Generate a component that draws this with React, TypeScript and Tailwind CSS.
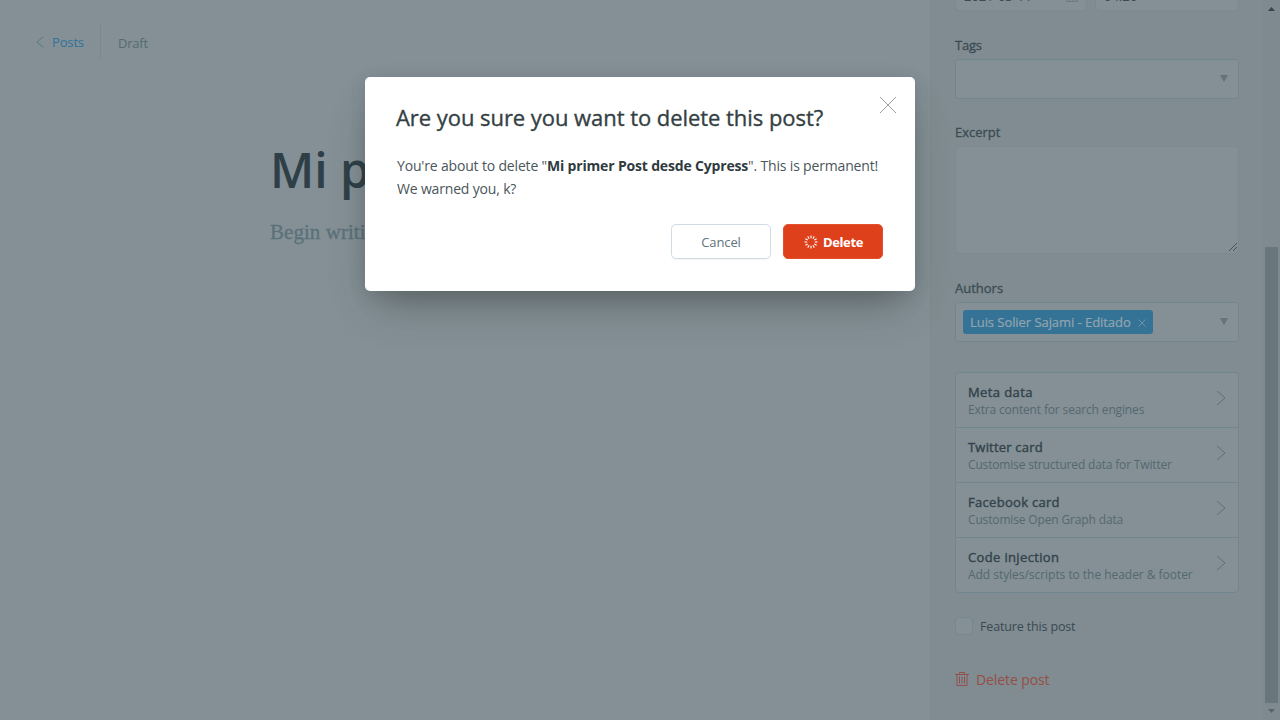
import type { ReactNode } from 'react';

const cards = [
  { title: 'Meta data', text: 'Extra content for search engines', a: 'tracking-[0.4px]', b: 'tracking-[-0.15px]' },
  { title: 'Twitter card', text: 'Customise structured data for Twitter', a: 'tracking-[0.2px]', b: 'tracking-[-0.17px]' },
  { title: 'Facebook card', text: 'Customise Open Graph data', a: 'tracking-[0.3px]', b: 'tracking-[-0.15px]' },
  { title: 'Code injection', text: 'Add styles/scripts to the header & footer', a: 'tracking-[0.35px]', b: 'tracking-[-0.04px]' },
];

function Label({ children }: { children: ReactNode }) {
  return (
    <div className="mb-1 h-5 text-[13px] leading-5 text-[#3c4b53] [-webkit-text-stroke:0.3px_#3c4b53]">{children}</div>
  );
}

function Caret() {
  return (
    <svg className="mr-[10px] mb-[2px] h-[7px] w-2 shrink-0" viewBox="0 0 8 7">
      <path d="M0 0h8L4 7z" fill="#65737a" />
    </svg>
  );
}

function Sidebar() {
  return (
    <aside className="flex h-[720px] w-[333px] shrink-0 flex-col overflow-hidden border-l border-[#7b8b92] bg-[#808c91] pl-6 pr-6">
      <div className="-mt-[29px] flex h-10 w-[284px] shrink-0 gap-2 text-[13px] text-[#3c4b53]">
        <div className="flex h-10 w-[132px] items-start justify-between rounded-[4px] border border-[#788a92] bg-[#849096] pl-2 pr-[8px]">
          <span className="h-10 leading-[48px]">2021-03-11</span>
          <svg className="mt-[18px] h-3 w-3" viewBox="0 0 12 12" fill="none" stroke="#6d7b82">
            <path d="M.5 1.500h11v10H.5zM.5 4.500h11M3.500 5v6M6.500 5v6M9.500 5v6M1 8.500h10" />
          </svg>
        </div>
        <div className="flex h-10 w-36 items-start justify-between rounded-[4px] border border-[#788a92] bg-[#849096] pl-2 pr-[14px]">
          <span className="h-10 leading-[48px]">04:26</span>
          <span className="h-10 text-[9px] leading-[48px] text-[#66757c]">(UTC)</span>
        </div>
      </div>

      <div className="mt-6 w-[284px] shrink-0">
        <Label>
          <span className="tracking-[-0.2px]">Tags</span>
        </Label>
        <div className="flex h-10 items-center justify-end rounded-[3px] border border-[#71868f] bg-[#849096]">
          <Caret />
        </div>
      </div>

      <div className="mt-[23px] w-[284px] shrink-0">
        <Label>Excerpt</Label>
        <div className="flex h-[108px] items-end justify-end rounded-[4px] border border-[#788a92] bg-[#849096]">
          <svg className="mr-px mb-px h-[9px] w-[9px]" viewBox="0 0 9 9" shapeRendering="crispEdges">
            <path d="M.5 8.500l8-8M4.500 8.500l4-4" stroke="#45535a" fill="none" />
          </svg>
        </div>
      </div>

      <div className="mt-6 w-[284px] shrink-0">
        <Label>Authors</Label>
        <div className="flex h-10 items-center justify-between rounded-[3px] border border-[#71868f] bg-[#849096] pl-[7px]">
          <div className="flex h-6 w-[190px] items-center justify-between rounded-[3px] bg-[#357396] pl-[7px] pr-[7px] text-[13px] leading-6 text-[#93a5ae]">
            <span className="whitespace-nowrap tracking-[-0.06px] [-webkit-text-stroke:0.2px_#93a5ae]">
              Luis Solier Sajami - Editado
            </span>
            <svg className="mt-[2px] h-2 w-2" viewBox="0 0 8 8">
              <path d="M.5.5l7 7M7.500.5l-7 7" stroke="#7b9bab" strokeWidth=".8" fill="none" />
            </svg>
          </div>
          <Caret />
        </div>
      </div>

      <div className="mt-[30px] w-[284px] shrink-0 rounded-[4px] border border-b-0 border-[#71868f] bg-[#849096]">
        {cards.map((c) => (
          <div
            key={c.title}
            className="flex h-[55px] justify-between border-b border-[#71868f] pl-3 pr-3 pt-[10px] last:rounded-b-[4px]"
          >
            <div className="whitespace-nowrap">
              <div
                className={
                  'h-[18px] text-[13px] leading-[18px] text-[#33434b] [-webkit-text-stroke:0.4px_#33434b] ' + c.a
                }
              >
                {c.title}
              </div>
              <div className={'text-[12px] leading-[18px] text-[#54686f] ' + c.b}>{c.text}</div>
            </div>
            <svg className="mt-[7px] h-4 w-[10px]" viewBox="0 0 10 16">
              <path d="M1 1l8 7-8 7" stroke="#55666e" strokeWidth=".8" fill="none" />
            </svg>
          </div>
        ))}
      </div>

      <div className="mt-6 flex h-[18px] shrink-0 items-center gap-[7px]">
        <div className="h-[18px] w-[18px] rounded-[4px] border border-[#738891] bg-[#849096]" />
        <span className="pt-[2px] text-[12.500px] leading-[18px] tracking-[-0.15px] text-[#3a4951]">Feature this post</span>
      </div>

      <div className="mt-[35px] flex h-5 shrink-0 items-center gap-[7px] text-[#954f46]">
        <svg className="mb-[2px] h-[14px] w-[14px]" viewBox="0 0 14 14" fill="none" stroke="#915148">
          <path d="M0 2.500h14M4.500 2V.5h5V2M2 2.500v11h10v-11M4.500 4.500v7M7 4.500v7M9.500 4.500v7" />
        </svg>
        <span className="text-sm leading-5 tracking-[-0.1px]">Delete post</span>
      </div>
    </aside>
  );
}

function Scrollbar() {
  return (
    <div className="flex h-[720px] w-[17px] shrink-0 flex-col items-center bg-[#7e8a90]">
      <svg className="mt-[7px] mr-px h-1 w-[7px] shrink-0" viewBox="0 0 7 4">
        <path d="M3.500 0L7 4H0z" fill="#37454c" />
      </svg>
      <div className="mt-[236px] mr-px h-[456px] w-[13px] shrink-0 bg-[#69767c]" />
      <svg className="mt-[6px] mr-px h-1 w-[7px] shrink-0" viewBox="0 0 7 4">
        <path d="M0 0h7L3.500 4z" fill="#56646b" />
      </svg>
    </div>
  );
}

function Spinner() {
  return (
    <svg className="ml-px h-[14px] w-[14px]" viewBox="0 0 14 14" stroke="#fff" strokeWidth="1.100">
      {Array.from({ length: 12 }, (_, i) => (
        <line key={i} x1="7" y1="0.5" x2="7" y2="3.200" transform={`rotate(${i * 30} 7 7)`} />
      ))}
    </svg>
  );
}

function Modal() {
  return (
    <div className="absolute left-[365px] top-[77px] h-[214px] w-[550px] rounded-[5px] bg-white px-8 pt-[26px] shadow-[0_22px_40px_-12px_rgba(40,45,40,0.42),0_4px_16px_rgba(50,60,65,0.18)]">
      <svg className="absolute right-[19px] top-5 h-4 w-4" viewBox="0 0 16 16">
        <path d="M0 0l16 16M16 0L0 16" stroke="#808284" strokeWidth=".8" fill="none" />
      </svg>
      <h2 className="-ml-px h-7 whitespace-nowrap text-[22px] leading-7 tracking-[-0.05px] text-[#343f44] [-webkit-text-stroke:0.35px_#343f44]">
        Are you sure you want to delete this post?
      </h2>
      <p className="mt-[23px] whitespace-nowrap text-[14px] leading-[23px] tracking-[-0.17px] text-[#4a555a]">
        You're about to delete "<b className="text-[#303b40]">Mi primer Post desde Cypress</b>". This is permanent!
        <br />
        We warned you, k?
      </p>
      <div className="mt-6 flex justify-end gap-3 text-[13px]">
        <button className="flex h-[35px] w-[100px] items-center justify-center rounded-[5px] border border-[#cfdde2] pt-[2px] tracking-[-0.1px] text-[#5f747c] shadow-[0_1px_1px_rgba(0,0,0,0.04)]">
          Cancel
        </button>
        <button className="flex h-[35px] w-[100px] items-center justify-center gap-[5px] rounded-[5px] border border-[#e5502c] bg-[#df401c] font-bold text-white">
          <Spinner />
          <span className="pt-[2px] tracking-[-0.4px]">Delete</span>
        </button>
      </div>
    </div>
  );
}

export default function App() {
  return (
    <div className="relative flex h-[720px] w-[1280px] overflow-hidden bg-[#849096] font-['Open_Sans','Noto_Sans',sans-serif]">
      <main className="flex min-w-0 flex-1 flex-col">
        <header className="flex h-[60px] items-center pl-9 pt-[24px] text-[13px]">
          <svg className="h-3 w-2" viewBox="0 0 8 12">
            <path d="M7.500.5L1 6l6.500 5.500" stroke="#477487" strokeWidth=".8" fill="none" />
          </svg>
          <span className="ml-2 w-8 whitespace-nowrap leading-5 tracking-[-0.15px] text-[#30729a]">Posts</span>
          <div className="ml-4 h-9 w-px bg-[#748b95]" />
          <span className="ml-[17px] mt-[2px] leading-5 tracking-[-0.2px] text-[#566a70]">Draft</span>
        </header>
        <div className="ml-[270px] mt-[78px] w-[600px] whitespace-nowrap">
          <h1 className="h-[64px] text-[48px] font-semibold leading-[64px] text-[#2e3f47]">Mi primer Post</h1>
          <p className="mt-[15px] font-['Liberation_Serif',serif] text-[21px] leading-[30px] tracking-[0.05px] text-[#5b7079] [-webkit-text-stroke:0.3px_#5b7079]">
            Begin writing your post...
          </p>
        </div>
      </main>
      <Sidebar />
      <Scrollbar />
      <Modal />
    </div>
  );
}
